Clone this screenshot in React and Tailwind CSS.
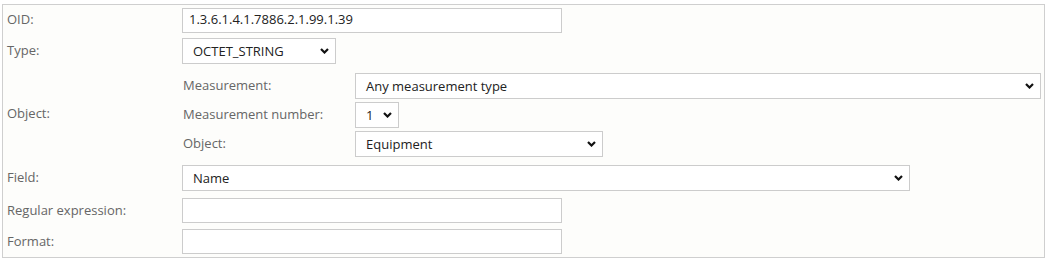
import React from "react";

const Chevron = () => (
  <svg width="9" height="6" viewBox="0 0 9 6" className="pointer-events-none absolute right-[6px] top-1/2 -translate-y-1/2">
    <path d="M1 1 L4.5 4.5 L8 1" fill="none" stroke="#111" strokeWidth="2.2" />
  </svg>
);

const Select = ({ value, w }) => (
  <div className={`relative h-[26px] border border-[#cccccc] bg-white ${w}`}>
    <div className="flex h-full items-center pl-[10px] pt-[1px] text-[13px] text-[#222]">{value}</div>
    <Chevron />
  </div>
);

const Input = ({ value = "", w = "w-[380px]" }) => (
  <div className={`flex h-[25px] items-center border border-[#cccccc] bg-white pl-[6px] text-[13px] text-[#222] ${w}`}>
    {value}
  </div>
);

const Row = ({ label, children, h }) => (
  <div className={`flex items-center ${h}`}>
    <div className="w-[179px] shrink-0 pl-[4px] text-[13px] text-[#666]">{label}</div>
    {children}
  </div>
);

export default function App() {
  return (
    <div className="h-[264px] w-[1052px] bg-white pl-[2px] pt-[4px] font-['Open_Sans',sans-serif]">
      <div className="h-[254px] w-[1043px] border border-[#cfcfcf] bg-[#fdfdfb]">
        <div className="mt-[2px]" />
        <Row label="OID:" h="h-[26px]">
          <Input value="1.3.6.1.4.1.7886.2.1.99.1.39" />
        </Row>
        <Row label="Type:" h="h-[32px] mt-[2px]">
          <Select value="OCTET_STRING" w="w-[154px]" />
        </Row>
        <Row label="Object:" h="h-[94px]">
          <div className="flex flex-col gap-[3px] pt-[2px]">
            {[
              ["Measurement:", "Any measurement type", "w-[686px]"],
              ["Measurement number:", "1", "w-[44px]"],
              ["Object:", "Equipment", "w-[248px]"],
            ].map(([l, v, w]) => (
              <div key={l} className="flex items-center">
                <div className="w-[173px] shrink-0 pl-[1px] text-[13px] text-[#666]">{l}</div>
                <Select value={v} w={w} />
              </div>
            ))}
          </div>
        </Row>
        <Row label="Field:" h="h-[34px]">
          <Select value="Name" w="w-[728px]" />
        </Row>
        <Row label="Regular expression:" h="h-[31px]">
          <Input />
        </Row>
        <Row label="Format:" h="h-[31px]">
          <Input />
        </Row>
      </div>
    </div>
  );
}
